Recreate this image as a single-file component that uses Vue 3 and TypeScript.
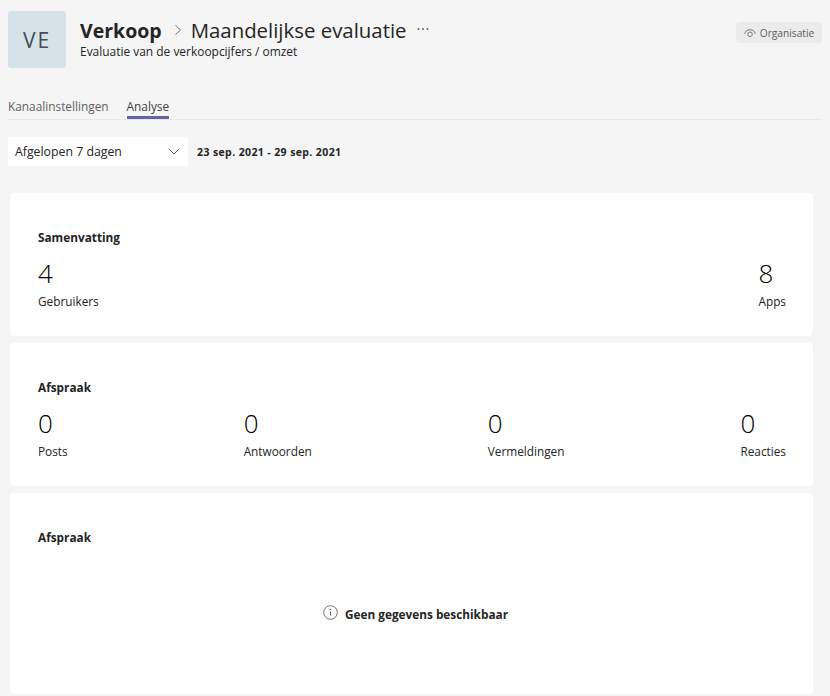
<script setup lang="ts">
const summary = [
  { value: '4', label: 'Gebruikers' },
  { value: '8', label: 'Apps' },
]
const engagement = [
  { value: '0', label: 'Posts' },
  { value: '0', label: 'Antwoorden' },
  { value: '0', label: 'Vermeldingen' },
  { value: '0', label: 'Reacties' },
]
</script>

<template>
  <div class="page">
    <header class="header">
      <div class="avatar">VE</div>
      <div class="heading">
        <div class="title-row">
          <span class="team">Verkoop</span>
          <svg class="crumb" width="8" height="12" viewBox="0 0 8 12"><path d="M1.500 1.500 6.500 6l-5 4.500" fill="none" stroke="#7a7a7a" stroke-width="1" /></svg>
          <span class="channel">Maandelijkse evaluatie</span>
          <svg class="more" width="12" height="4" viewBox="0 0 12 4"><circle cx="1.500" cy="2" r="1" fill="#616161" /><circle cx="6" cy="2" r="1" fill="#616161" /><circle cx="10.500" cy="2" r="1" fill="#616161" /></svg>
        </div>
        <div class="subtitle">Evaluatie van de verkoopcijfers / omzet</div>
      </div>
      <div class="badge">
        <svg width="12" height="10" viewBox="0 0 12 10" fill="none" stroke="#7a7a7a" stroke-width="1"><path d="M.7 5.800A5.400 5 0 0 1 11.300 5.800" /><circle cx="6" cy="6.300" r="2.300" /></svg>
        <span>Organisatie</span>
      </div>
    </header>

    <nav class="tabs">
      <span class="tab">Kanaalinstellingen</span>
      <span class="tab active">Analyse</span>
    </nav>

    <div class="filters">
      <div class="select">
        <span>Afgelopen 7 dagen</span>
        <svg width="12" height="7" viewBox="0 0 12 7"><path d="M.7.8 6 6l5.300-5.200" fill="none" stroke="#616161" stroke-width="1" /></svg>
      </div>
      <span class="range">23 sep. 2021 - 29 sep. 2021</span>
    </div>

    <section class="card card-stats">
      <h2>Samenvatting</h2>
      <div class="stats">
        <div v-for="s in summary" :key="s.label" class="stat">
          <div class="value">{{ s.value }}</div>
          <div class="label">{{ s.label }}</div>
        </div>
      </div>
    </section>

    <section class="card card-stats">
      <h2>Afspraak</h2>
      <div class="stats">
        <div v-for="s in engagement" :key="s.label" class="stat">
          <div class="value">{{ s.value }}</div>
          <div class="label">{{ s.label }}</div>
        </div>
      </div>
    </section>

    <section class="card card-empty">
      <h2>Afspraak</h2>
      <div class="empty">
        <svg width="15" height="15" viewBox="0 0 15 15" fill="none"><circle cx="7.500" cy="7.500" r="6.800" stroke="#757575" /><path d="M7.500 6.500v4" stroke="#555" /><circle cx="7.500" cy="4.500" r=".7" fill="#555" /></svg>
        <span>Geen gegevens beschikbaar</span>
      </div>
    </section>
  </div>
</template>

<style>
html, body { margin: 0; background: #f5f5f5; }
</style>

<style scoped>
.page {
  width: 830px;
  height: 696px;
  overflow: hidden;
  background: #f5f5f5;
  color: #242424;
  font-family: "Open Sans", "Noto Sans", sans-serif;
  font-size: 12px;
  box-sizing: border-box;
  padding: 11px 8px 0 8px;
}
.header { display: flex; height: 57px; }
.avatar {
  width: 58px;
  height: 57px;
  border-radius: 3px;
  background: #d5e2e8;
  color: #424d52;
  font-size: 21px;
  letter-spacing: 2px;
  display: flex;
  align-items: center;
  justify-content: center;
}
.heading { margin-left: 14px; padding-top: 4px; flex: 1; }
.title-row { display: flex; align-items: center; height: 30px; }
.team { font-size: 19.500px; font-weight: 700; }
.crumb { margin: 0 9px 0 12px; }
.channel { font-size: 20.400px; }
.more { margin-left: 10px; margin-bottom: 2px; }
.subtitle { font-size: 11.950px; line-height: 14px; }
.badge {
  align-self: flex-start;
  margin-top: 11px;
  height: 21px;
  width: 86px;
  box-sizing: border-box;
  border-radius: 4px;
  background: #ebebeb;
  color: #616161;
  font-size: 10.200px;
  display: flex;
  align-items: center;
  justify-content: center;
  gap: 4px;
}
.tabs {
  display: flex;
  gap: 18px;
  height: 30px;
  margin-top: 22px;
  border-bottom: 1px solid #e8e8e8;
  box-sizing: border-box;
}
.tab { color: #616161; font-size: 11.850px; line-height: 20px; padding-top: 6px; height: 23px; }
.active { color: #424242; border-bottom: 3px solid #6264a7; height: 20px; box-sizing: content-box; }
.filters { display: flex; align-items: center; margin-top: 17px; height: 29px; }
.select {
  width: 180px;
  height: 29px;
  box-sizing: border-box;
  background: #fff;
  border-radius: 3px;
  padding: 0 8px 0 7px;
  display: flex;
  align-items: center;
  justify-content: space-between;
  font-size: 12.300px;
}
.range { margin-left: 9px; font-size: 10.500px; font-weight: 700; letter-spacing: .39px; }
.card {
  margin-left: 2px;
  width: 803px;
  background: #fff;
  border-radius: 4px;
  box-sizing: border-box;
  padding: 36px 27px 0 28px;
  margin-bottom: 7px;
}
.card:first-of-type { margin-top: 27px; }
.card-stats { height: 143px; }
.card-empty { height: 201px; }
h2 { margin: 0; font-size: 11.800px; line-height: 17px; font-weight: 700; }
.stats { display: flex; justify-content: space-between; margin-top: 10px; }
.value { font-size: 26px; line-height: 34px; font-weight: 300; color: #000; }
.label { font-size: 11.800px; line-height: 16px; margin-top: 3px; }
.empty {
  display: flex;
  align-items: center;
  justify-content: center;
  gap: 7px;
  margin-top: 59px;
  font-weight: 700;
  font-size: 11.800px;
}
.empty svg { margin-bottom: 3px; margin-left: 7px; }
</style>
